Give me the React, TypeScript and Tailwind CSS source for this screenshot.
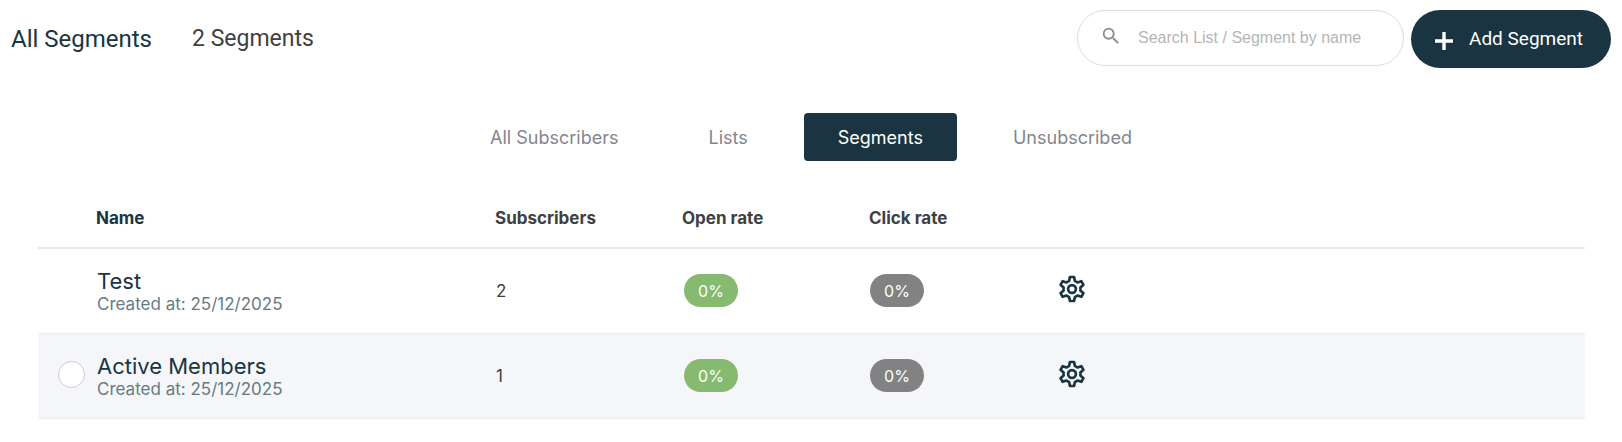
import { useState } from "react";

interface Segment {
  id: string;
  name: string;
  createdAt: string;
  subscribers: number;
  openRate: number;
  clickRate: number;
  selectable: boolean;
}

const segments: Segment[] = [
  {
    id: "test",
    name: "Test",
    createdAt: "25/12/2025",
    subscribers: 2,
    openRate: 0,
    clickRate: 0,
    selectable: false,
  },
  {
    id: "active-members",
    name: "Active Members",
    createdAt: "25/12/2025",
    subscribers: 1,
    openRate: 0,
    clickRate: 0,
    selectable: true,
  },
];

const tabs = ["All Subscribers", "Lists", "Segments", "Unsubscribed"];

function SearchIcon() {
  return (
    <svg viewBox="0 0 24 24" className="mb-1 size-[22px] shrink-0 text-[#8c8c8c]" fill="currentColor" aria-hidden="true">
      <path d="M15.5 14h-.79l-.28-.27A6.47 6.47 0 0 0 16 9.5 6.5 6.5 0 1 0 9.5 16c1.61 0 3.09-.59 4.23-1.57l.27.28v.79l5 4.99L20.49 19l-4.99-5zm-6 0C7.01 14 5 11.99 5 9.5S7.01 5 9.5 5 14 7.01 14 9.5 11.99 14 9.5 14z" />
    </svg>
  );
}

function PlusIcon() {
  return (
    <svg viewBox="0 0 18 18" className="mt-1 size-[18px]" fill="none" stroke="currentColor" strokeWidth="3.4" aria-hidden="true">
      <path d="M9 0v18M0 9h18" />
    </svg>
  );
}

function GearIcon() {
  return (
    <svg
      viewBox="-14 -14 28 28"
      className="size-7"
      fill="none"
      stroke="currentColor"
      strokeWidth="2.7"
      strokeLinejoin="round"
      aria-hidden="true">
      <path d="M-2.9-8-2.1-12H2.1L2.9-8Q4.3-7.5 5.48-6.51L9.34-7.82 11.44-4.18 8.38-1.49Q8.7 0 8.38 1.49L11.44 4.18 9.34 7.82 5.48 6.51Q4.3 7.5 2.9 8L2.1 12H-2.1L-2.9 8Q-4.3 7.5-5.48 6.51L-9.34 7.82-11.44 4.18-8.38 1.49Q-8.7 0-8.38-1.49L-11.44-4.18-9.34-7.82-5.48-6.51Q-4.3-7.5-2.9-8z" />
      <circle r="3.9" />
    </svg>
  );
}

export default function App() {
  const [activeTab, setActiveTab] = useState("Segments");
  const [search, setSearch] = useState("");

  const visible = segments.filter((segment) =>
    segment.name.toLowerCase().includes(search.toLowerCase())
  );

  return (
    <div className="bg-white pb-6 font-['Inter',sans-serif] text-[#404040]">
      <header className="flex items-start justify-between pt-[10px] pr-[11px] pl-[11px] font-['Roboto',sans-serif]">
        <div className="flex h-[58px] items-center gap-10">
          <h1 className="text-2xl text-[#1a3541]">All Segments</h1>
          <p className="text-[23px]">2 Segments</p>
        </div>
        <div className="flex items-start gap-[7px]">
          <label className="flex h-14 w-[327px] items-center gap-4 rounded-full border border-[#dcdcdc] pr-6 pl-[22px]">
            <SearchIcon />
            <input
              type="text"
              aria-label="Search List / Segment by name"
              placeholder="Search List / Segment by name"
              value={search}
              onChange={(e) => setSearch(e.target.value)}
              className="min-w-0 flex-1 bg-transparent font-['Liberation_Sans',Arial,sans-serif] text-base outline-none placeholder:text-[#b5b5b5]"
            />
          </label>
          <button
            type="button"
            className="flex h-[58px] w-[200px] items-center justify-center gap-4 rounded-full bg-[#1a3541] pr-1 text-[19px] text-white">
            <PlusIcon />
            Add Segment
          </button>
        </div>
      </header>

      <nav className="mt-[45px] flex justify-center gap-[22px]">
        {tabs.map((tab) => (
          <button
            key={tab}
            type="button"
            onClick={() => setActiveTab(tab)}
            className={
              tab === activeTab
                ? "h-12 rounded bg-[#1a3541] px-[34px] pt-0.5 text-lg text-white"
                : "h-12 rounded px-[34px] pt-0.5 text-lg text-[#85858f]"
            }>
            {tab}
          </button>
        ))}
      </nav>

      <div className="mt-6 pr-[37px] pl-[38px]">
        <table className="w-full table-fixed border-collapse text-left">
          <thead>
            <tr className="h-[63px] border-b-2 border-[#e8e8ed] text-[17px]">
              <th className="w-[58px]" aria-label="Select" />
              <th className="w-[399px] pt-1.5 font-bold text-[#1a3541]">Name</th>
              <th className="w-[187px] pt-1.5 font-bold">Subscribers</th>
              <th className="w-[187px] pt-1.5 font-bold">Open rate</th>
              <th className="w-[187px] pt-1.5 font-bold">Click rate</th>
              <th aria-label="Settings" />
            </tr>
          </thead>
          <tbody>
            {visible.map((segment) => (
              <tr
                key={segment.id}
                className="h-[85px] border-b border-[#ebecf2] even:bg-[#f4f6fa]">
                <td className="pb-0.5 pl-5">
                  {segment.selectable && (
                    <input
                      type="checkbox"
                      aria-label={`Select ${segment.name}`}
                      className="block size-[27px] appearance-none rounded-full border border-[#cccccc] bg-white checked:bg-[#1a3541]"
                    />
                  )}
                </td>
                <td className="pt-0.5 pl-px">
                  <a href="#" className="block text-[22px] leading-6 text-[#1a3541]">
                    {segment.name}
                  </a>
                  <p className="text-[17px] leading-[22px] text-[#667b84]">
                    Created at: {segment.createdAt}
                  </p>
                </td>
                <td className="pt-0.5 pl-px text-[17px]">{segment.subscribers}</td>
                <td className="pl-0.5">
                  <span className="flex h-[33px] w-[54px] items-center justify-center rounded-full bg-[#86ba70] text-base text-white">
                    {segment.openRate}%
                  </span>
                </td>
                <td className="pl-px">
                  <span className="flex h-[33px] w-[54px] items-center justify-center rounded-full bg-[#828282] text-base text-white">
                    {segment.clickRate}%
                  </span>
                </td>
                <td className="pb-1 pl-0.5">
                  <button
                    type="button"
                    aria-label={`Settings for ${segment.name}`}
                    className="block text-[#1a3541]">
                    <GearIcon />
                  </button>
                </td>
              </tr>
            ))}
          </tbody>
        </table>
      </div>
    </div>
  );
}
